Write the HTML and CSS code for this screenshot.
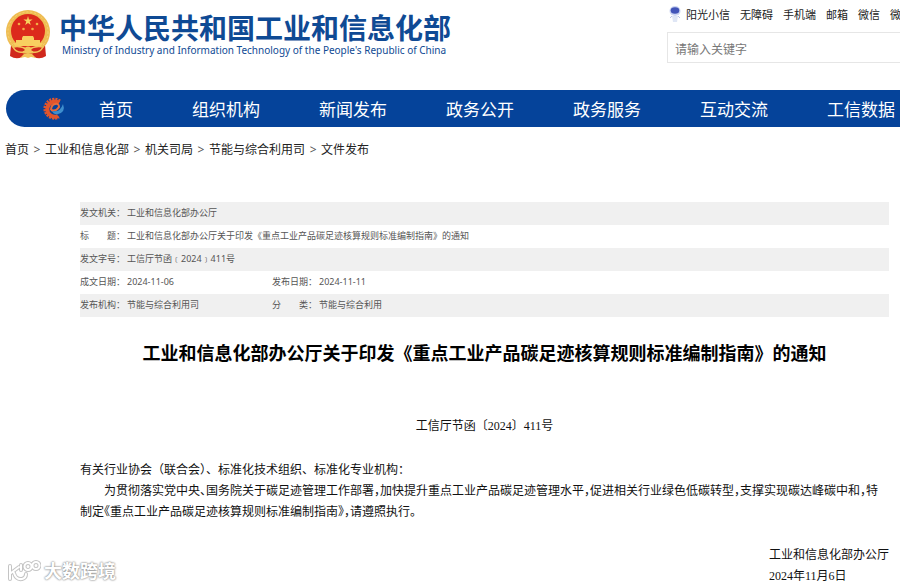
FILE: index.html
```html
<!DOCTYPE html>
<html lang="zh-CN">
<head>
  <meta charset="UTF-8">
  <meta name="viewport" content="width=device-width, initial-scale=1">
  <title>工业和信息化部办公厅关于印发《重点工业产品碳足迹核算规则标准编制指南》的通知</title>
  <link rel="stylesheet" href="styles.css">
</head>
<body>

  <header class="header">
    <a class="brand" href="#">
      <svg class="emblem" viewBox="0 0 46 50" aria-hidden="true">
        <path d="M6 35 L5 46 Q11 50 17 47 L23 45 L29 47 Q35 50 41 46 L40 35 Z" fill="#d0281c"/>
        <circle cx="23" cy="22" r="22" fill="#efbd52"/>
        <circle cx="23" cy="22" r="20" fill="none" stroke="#f6d27a" stroke-width="1" stroke-dasharray="2 2"/>
        <circle cx="23" cy="21" r="17" fill="#dc2a1c"/>
        <path d="M23 6 L24 9.400 L27.600 9.400 L24.700 11.500 L25.800 15 L23 12.900 L20.200 15 L21.300 11.500 L18.400 9.400 L22 9.400 Z" fill="#f8d35e"/>
        <g fill="#f3ae45">
          <circle cx="14" cy="14" r="1.300"/>
          <circle cx="32" cy="14" r="1.300"/>
          <circle cx="18.500" cy="19" r="1.300"/>
          <circle cx="27.500" cy="19" r="1.300"/>
        </g>
        <path d="M17 28 L18 26 H28 L29 28 V30 H35 V33 H38 L36 36 H10 L8 33 H11 V30 H17 Z" fill="#f8cf60"/>
        <path d="M8 37 Q15 35 23 40 Q31 35 38 37 Q35 43 28 42 L23 40 L18 42 Q11 43 8 37" fill="#d0281c" stroke="#f3c45a" stroke-width="1.500"/>
        <circle cx="23" cy="40" r="3.500" fill="#f3c45a"/>
        <path d="M15 48 L19 44 H27 L31 48 L26 47 L23 48 L20 47 Z" fill="#f3c45a"/>
      </svg>
      <span class="brand-text">
        <strong>中华人民共和国工业和信息化部</strong>
        <small>Ministry of Industry and Information Technology of the People's Republic of China</small>
      </span>
    </a>

    <div class="tools">
      <div class="tool-links">
        <svg class="robot" viewBox="0 0 12 17" aria-hidden="true">
          <ellipse cx="6" cy="5" rx="5.500" ry="5" fill="#ccd5f2"/>
          <ellipse cx="6" cy="4.500" rx="4.300" ry="3.300" fill="#4254b8"/>
          <path d="M3 10 H9 L8 16 H4 Z" fill="#dfe6f5"/>
          <path d="M1 12 L3 10 M11 12 L9 10" stroke="#b9c5e6"/>
        </svg>
        <a href="#">阳光小信</a>
        <a href="#">无障碍</a>
        <a href="#">手机端</a>
        <a href="#">邮箱</a>
        <a href="#">微信</a>
        <a href="#">微博</a>
      </div>
      <input class="search" type="text" placeholder="请输入关键字" aria-label="请输入关键字">
    </div>
  </header>

  <nav class="nav">
    <svg class="nav-logo" viewBox="0 0 24 24" aria-hidden="true">
      <path d="M18 4 A9.500 9.500 0 1 0 17 20" fill="none" stroke="#e2552c" stroke-width="3" stroke-dasharray="2 1"/>
      <path d="M17 6 A7.500 7.500 0 1 0 16 19" fill="none" stroke="#e2552c" stroke-width="4"/>
      <path d="M9 13 Q14 15 17 10 Q17 6 13 7 Q9 8 9 13" fill="none" stroke="#e96a38" stroke-width="2"/>
      <path d="M10 14 Q18 16 21 7 Q24 15 16 17 Q12 18 10 14" fill="#3e8fce"/>
    </svg>
    <a href="#">首页</a>
    <a href="#">组织机构</a>
    <a href="#">新闻发布</a>
    <a href="#">政务公开</a>
    <a href="#">政务服务</a>
    <a href="#">互动交流</a>
    <a href="#">工信数据</a>
  </nav>

  <div class="crumbs">
    <a href="#">首页</a><span>&gt;</span><a href="#">工业和信息化部</a><span>&gt;</span><a href="#">机关司局</a><span>&gt;</span><a href="#">节能与综合利用司</a><span>&gt;</span><a href="#">文件发布</a>
  </div>

  <main class="article">
    <table class="meta">
      <colgroup>
        <col class="col-label">
        <col class="col-value">
        <col class="col-label">
        <col>
      </colgroup>
      <tr>
        <th>发文机关：</th>
        <td colspan="3">工业和信息化部办公厅</td>
      </tr>
      <tr>
        <th>标　　题：</th>
        <td colspan="3">工业和信息化部办公厅关于印发《重点工业产品碳足迹核算规则标准编制指南》的通知</td>
      </tr>
      <tr>
        <th>发文字号：</th>
        <td colspan="3">工信厅节函﹝2024﹞411号</td>
      </tr>
      <tr>
        <th>成文日期：</th>
        <td>2024-11-06</td>
        <th>发布日期：</th>
        <td>2024-11-11</td>
      </tr>
      <tr>
        <th>发布机构：</th>
        <td>节能与综合利用司</td>
        <th>分　　类：</th>
        <td>节能与综合利用</td>
      </tr>
    </table>

    <h1>工业和信息化部办公厅关于印发《重点工业产品碳足迹核算规则标准编制指南》的通知</h1>

    <div class="content">
      <p class="doc-no">工信厅节函〔2024〕411号</p>
      <p>有关行业协会（联合会）、标准化技术组织、标准化专业机构：</p>
      <p class="indent">为贯彻落实党中央、国务院关于碳足迹管理工作部署，加快提升重点工业产品碳足迹管理水平，促进相关行业绿色低碳转型，支撑实现碳达峰碳中和，特制定《重点工业产品碳足迹核算规则标准编制指南》，请遵照执行。</p>
      <div class="sign">
        <p>工业和信息化部办公厅</p>
        <p>2024年11月6日</p>
      </div>
    </div>
  </main>

  <div class="watermark">
    <svg viewBox="0 0 34 24" aria-hidden="true">
      <defs>
        <path id="mark" d="M3 7 V20 M12 8 L4 14 M7 14 Q9 21 15 20 Q19 19 19 15 M14 6 V11 M21 4 A3.500 3.500 0 1 0 21 11 A3.500 3.500 0 1 0 21 4 M29 3 A3.500 3.500 0 1 0 29 10 A3.500 3.500 0 1 0 29 3"/>
      </defs>
      <g fill="none" stroke-linecap="round" stroke-linejoin="round">
        <use href="#mark" stroke="#c4c4c4" stroke-width="4"/>
        <use href="#mark" stroke="#fff" stroke-width="2"/>
      </g>
    </svg>
    <span>大数跨境</span>
  </div>

</body>
</html>
```
FILE: styles.css
```css
* {
  box-sizing: border-box;
}

body {
  margin: 0;
  position: relative;
  background: #fff;
  color: #222;
  font-family: "Noto Sans", "Noto Sans CJK SC", sans-serif;
  font-size: 12px;
  overflow-x: hidden;
}

a {
  color: inherit;
  text-decoration: none;
}

p {
  margin: 0;
}

/* Header */
.header {
  display: flex;
  justify-content: space-between;
  height: 90px;
}

.brand {
  display: flex;
  align-items: flex-start;
  flex: none;
  gap: 8px;
  padding: 10px 0 0 5px;
  color: #0f4a94;
}

.emblem {
  width: 46px;
  height: 50px;
}

.brand-text {
  display: flex;
  flex-direction: column;
}

.brand-text strong {
  font-family: "Noto Sans CJK SC", sans-serif;
  font-size: 28px;
  line-height: 34px;
}

.brand-text small {
  padding-left: 3px;
  font-size: 10px;
  line-height: 12px;
}

.tools {
  flex: none;
  width: 233px;
  padding-top: 5px;
  overflow: hidden;
}

.tool-links {
  display: flex;
  align-items: center;
  gap: 10px;
  height: 18px;
  margin-bottom: 9px;
  padding-left: 2px;
  font-size: 11px;
  white-space: nowrap;
}

.robot {
  flex: none;
  width: 12px;
  height: 17px;
  margin-right: -5px;
}

.search {
  display: block;
  width: 100%;
  height: 31px;
  padding: 3px 8px 0 7px;
  border: 1px solid #e6e6e6;
  border-right: 0;
  font-family: inherit;
  font-size: 12px;
}

.search::placeholder {
  color: #777;
}

/* Main navigation */
.nav {
  display: flex;
  align-items: center;
  gap: 59px;
  height: 37px;
  margin-left: 6px;
  padding-left: 36px;
  border-radius: 19px 0 0 19px;
  background: #05439a;
  color: #fff;
  font-size: 17px;
  white-space: nowrap;
  overflow: hidden;
}

.nav-logo {
  flex: none;
  width: 24px;
  height: 24px;
  margin-right: -26px;
}

.crumbs {
  display: flex;
  padding: 14px 5px 0;
  line-height: 18px;
}

.crumbs span {
  width: 16px;
  text-align: center;
  color: #555;
}

/* Article */
.article {
  padding: 43px 11px 0 80px;
}

.meta {
  width: 100%;
  table-layout: fixed;
  border-collapse: collapse;
  color: #555;
  font-size: 9px;
  line-height: 13px;
}

.meta tr:nth-child(odd) {
  background: #f0f0f0;
}

.meta th,
.meta td {
  padding: 4px 0 6px;
  font-weight: normal;
  text-align: left;
  white-space: nowrap;
}

.col-label {
  width: 47px;
}

.col-value {
  width: 145px;
}

h1 {
  margin: 22px 0 49px;
  color: #000;
  font-size: 18px;
  line-height: 28px;
  text-align: center;
}

.content {
  color: #111;
  font-family: "Liberation Serif", "Noto Sans CJK SC", serif;
  font-size: 12px;
  line-height: 21px;
}

.doc-no {
  margin-bottom: 23px;
  text-align: center;
}

.indent {
  text-indent: 24px;
  font-feature-settings: "halt";
}

.sign {
  width: fit-content;
  margin: 22px 0 0 auto;
}

/* Watermark */
.watermark {
  position: absolute;
  left: 7px;
  bottom: 4px;
  display: flex;
  align-items: center;
  gap: 3px;
  color: #fff;
  font-size: 18px;
  font-weight: bold;
  line-height: 24px;
  text-shadow: 0 0 2px #888, 0 0 2px #999;
}

.watermark svg {
  width: 34px;
  height: 24px;
}
```
